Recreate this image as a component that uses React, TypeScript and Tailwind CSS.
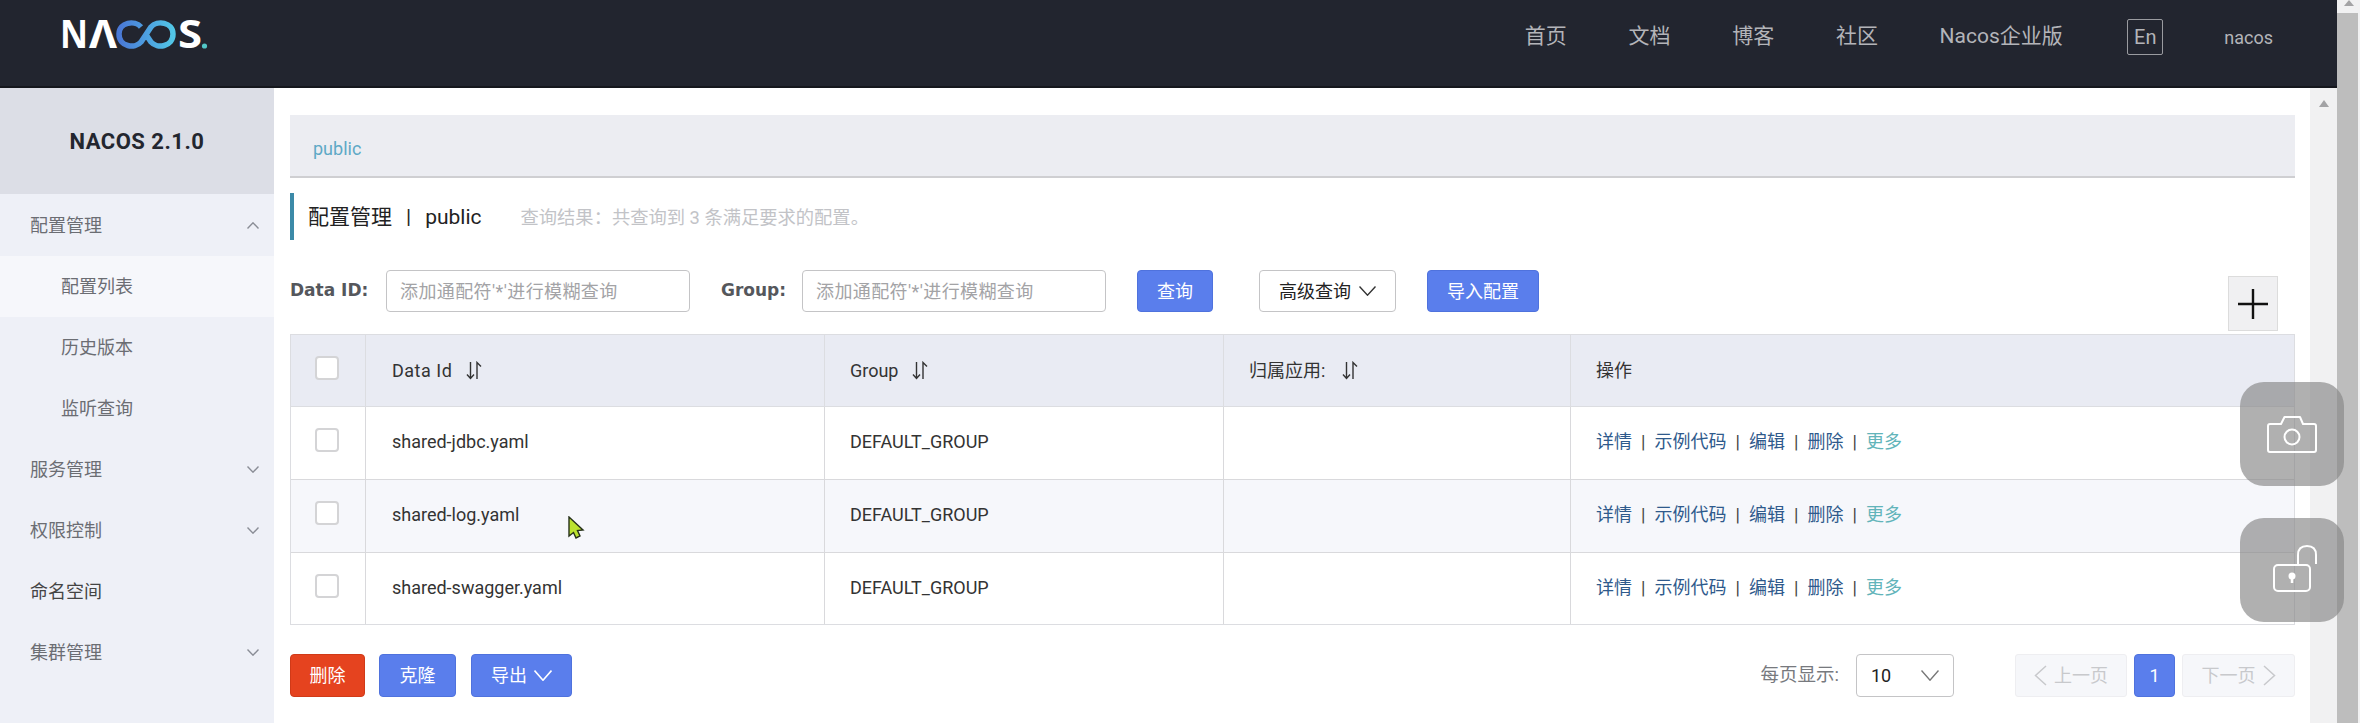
import React from "react";

const FONT = "font-['Roboto','Noto_Sans_CJK_SC',sans-serif]";

const navLinks = [
  { label: "首页", cls: "w-[42px]" },
  { label: "文档", cls: "w-[42px]" },
  { label: "博客", cls: "w-[42px]" },
  { label: "社区", cls: "w-[42px]" },
  { label: "Nacos企业版", cls: "w-[127px]" },
];

const rows = [
  { id: "shared-jdbc.yaml", bg: "bg-white", h: "h-[73px] border-b" },
  { id: "shared-log.yaml", bg: "bg-[#f6f7fb]", h: "h-[73px] border-b" },
  { id: "shared-swagger.yaml", bg: "bg-white", h: "h-[71px]" },
];

const Chevron: React.FC<{ up?: boolean; w?: number; h?: number; color?: string; sw?: number }> = ({
  up,
  w = 12,
  h = 7,
  color = "#8a8d96",
  sw = 1.4,
}) => (
  <svg width={w} height={h} viewBox={`0 0 ${w} ${h}`} fill="none" className="shrink-0">
    <polyline
      points={up ? `0.5,${h - 0.5} ${w / 2},0.8 ${w - 0.5},${h - 0.5}` : `0.5,0.5 ${w / 2},${h - 0.8} ${w - 0.5},0.5`}
      stroke={color}
      strokeWidth={sw}
    />
  </svg>
);

const SortIcon = () => (
  <svg width="16" height="19" viewBox="0 0 16 19" fill="none" className="shrink-0">
    <path d="M4.5 1V17M1 13.5L4.5 17.5L8 13.5" stroke="#333" strokeWidth="1.4" />
    <path d="M11 18V1.5L15 5.5" stroke="#333" strokeWidth="1.4" />
  </svg>
);

const Logo = () => (
  <svg className="-mt-[15px]" width="150" height="60" viewBox="0 -16 150 60" fill="none">
    <defs>
      <linearGradient id="nacosInf" x1="0" y1="0" x2="1" y2="0">
        <stop offset="0" stopColor="#4a78d6" />
        <stop offset="0.5" stopColor="#4d9fe0" />
        <stop offset="1" stopColor="#52c6e6" />
      </linearGradient>
    </defs>
    <text x="0" y="28" fontFamily="Open Sans" fontWeight="700" fontSize="39" fill="#fff" textLength="28" lengthAdjust="spacingAndGlyphs">
      N
    </text>
    <text x="29" y="28" fontFamily="Noto Sans" fontWeight="700" fontSize="39" fill="#fff" textLength="28" lengthAdjust="spacingAndGlyphs">
      Λ
    </text>
    <path
      d="M81 7C75 0 59 2 59 14C59 27 75 29 81 22L91 7C97 0 113 2 113 14C113 27 97 29 91 22L87 16"
      stroke="url(#nacosInf)"
      strokeWidth="5.5"
    />
    <text x="118" y="28" fontFamily="Open Sans" fontWeight="700" fontSize="39" fill="#fff" textLength="24" lengthAdjust="spacingAndGlyphs">
      S
    </text>
    <circle cx="144.5" cy="26" r="2.6" fill="#52c6c6" />
  </svg>
);

const SideItem: React.FC<{ label: string; sub?: boolean; active?: boolean; arrow?: "up" | "down"; dark?: boolean }> = ({
  label,
  sub,
  active,
  arrow,
  dark,
}) => (
  <div
    className={`flex h-[61px] items-center justify-between pr-[15px] ${sub ? "pl-[61px]" : "pl-[30px]"} ${
      active ? "bg-[#f6f7fb]" : ""
    } ${dark ? "text-[#444]" : "text-[#6b6d73]"}`}
  >
    <span>{label}</span>
    {arrow && <Chevron up={arrow === "up"} />}
  </div>
);

const Checkbox = () => <div className="h-6 w-6 rounded-[4px] border-2 border-[#d4d4d6] bg-white" />;

const BlueButton: React.FC<{ children: React.ReactNode; cls: string }> = ({ children, cls }) => (
  <div className={`flex items-center justify-center rounded-[4px] border border-[#4f72dd] bg-[#5a7eec] text-white ${cls}`}>
    {children}
  </div>
);

const Sep = () => <span className="w-[22.5px] text-center text-[#444]">|</span>;

const Actions = () => (
  <div className="flex items-center text-[#2f5a8c]">
    <span>详情</span>
    <Sep />
    <span>示例代码</span>
    <Sep />
    <span>编辑</span>
    <Sep />
    <span>删除</span>
    <Sep />
    <span className="text-[#62b4ba]">更多</span>
  </div>
);

const App: React.FC = () => {
  return (
    <div className={`relative flex h-[723px] w-[2360px] overflow-hidden bg-white text-[18px] ${FONT}`}>
      <div className="flex w-[2337px] flex-col">
        {/* header */}
        <header className="flex h-[88px] shrink-0 items-start justify-between border-b-2 border-[#15171d] bg-[#22252f] pl-[60px] pr-[64px] pt-[19px]">
          <Logo />
          <nav className="flex h-[36px] items-center text-[21px] text-[#b3b4b9]">
            {navLinks.map((link) => (
              <span key={link.label} className={`mr-[61.7px] whitespace-nowrap ${link.cls}`}>
                {link.label}
              </span>
            ))}
            <span className="-ml-[1px] flex h-[36px] w-[36px] items-center justify-center rounded-[2px] border border-[#9a9ba0] text-[20px]">
              En
            </span>
            <span className="ml-[61px] text-[18px]">nacos</span>
          </nav>
        </header>

        <div className="flex min-h-0 flex-1">
          {/* sidebar */}
          <aside className="w-[274px] shrink-0 bg-[#eef0f7]">
            <div className="flex h-[106px] items-center justify-center bg-[#dcdee6] text-[22px] font-bold tracking-[0.5px] text-[#23262f]">
              NACOS 2.1.0
            </div>
            <div className="pt-[1px]">
              <SideItem label="配置管理" arrow="up" />
              <SideItem label="配置列表" sub active />
              <SideItem label="历史版本" sub />
              <SideItem label="监听查询" sub />
              <SideItem label="服务管理" arrow="down" />
              <SideItem label="权限控制" arrow="down" />
              <SideItem label="命名空间" dark />
              <SideItem label="集群管理" arrow="down" />
            </div>
          </aside>

          {/* main */}
          <main className="w-[2036px] shrink-0 pl-[16px] pr-[15px] pt-[27px]">
            <div className="flex h-[63px] items-center border-b-2 border-[#cfcfd2] bg-[#ecedf2] pl-[23px] pt-[6px] text-[#5ea9c6]">
              public
            </div>

            <div className="mt-[15px] flex h-[47px] items-center border-l-4 border-[#3c8aa8] pl-[14px] pt-[2px]">
              <span className="text-[21px] text-[#222]">配置管理</span>
              <span className="mx-[14px] text-[21px] text-[#222]">|</span>
              <span className="text-[21px] text-[#222]">public</span>
              <span className="ml-[39px] text-[18.3px] text-[#c2c3c7]">查询结果：共查询到 3 条满足要求的配置。</span>
            </div>

            <div className="mt-[30px] flex h-[42px] items-start">
              <span className="flex h-full w-[96px] items-center font-['DejaVu_Sans',sans-serif] text-[17px] font-bold text-[#55575c]">
                Data ID:
              </span>
              <div className="flex h-full w-[304px] items-center rounded-[4px] border border-[#c4c4c6] pl-[13px] tracking-[0.4px] text-[#a3a3a6]">
                添加通配符'*'进行模糊查询
              </div>
              <span className="ml-[31px] flex h-full w-[81px] items-center font-['DejaVu_Sans',sans-serif] text-[17px] font-bold text-[#55575c]">
                Group:
              </span>
              <div className="flex h-full w-[304px] items-center rounded-[4px] border border-[#c4c4c6] pl-[13px] tracking-[0.4px] text-[#a3a3a6]">
                添加通配符'*'进行模糊查询
              </div>
              <BlueButton cls="ml-[31px] h-full w-[76px]">查询</BlueButton>
              <div className="ml-[46px] flex h-full w-[137px] items-center justify-center gap-[8px] rounded-[4px] border border-[#c4c4c6] text-[#222]">
                高级查询
                <Chevron w={17} h={10} color="#333" />
              </div>
              <BlueButton cls="ml-[31px] h-full w-[112px]">导入配置</BlueButton>
              <div className="ml-[689px] mt-[6px] flex h-[55px] w-[50px] shrink-0 items-center justify-center border border-[#dcdcdc] bg-[#f0f0f2]">
                <svg width="32" height="32" viewBox="0 0 32 32">
                  <path d="M16 1V31M1 16H31" stroke="#111" strokeWidth="2.4" />
                </svg>
              </div>
            </div>

            {/* table */}
            <div className="mt-[22px] border border-[#dcdde1]">
              <div className="grid h-[72px] grid-cols-[75px_459px_399px_347px_723px] border-b border-[#dcdde1] bg-[#e9ebf3] text-[#333]">
                <div className="flex items-start justify-center border-r border-[#dcdde1] pr-[3px] pt-[21px]">
                  <Checkbox />
                </div>
                <div className="flex items-center gap-[14px] border-r border-[#dcdde1] pl-[26px]">
                  <span className="tracking-[0.5px]">Data Id</span>
                  <SortIcon />
                </div>
                <div className="flex items-center gap-[14px] border-r border-[#dcdde1] pl-[25px]">
                  Group
                  <SortIcon />
                </div>
                <div className="flex items-center gap-[17px] border-r border-[#dcdde1] pl-[25px]">
                  归属应用:
                  <SortIcon />
                </div>
                <div className="flex items-center pl-[25px]">操作</div>
              </div>
              {rows.map((row) => (
                <div
                  key={row.id}
                  className={`grid grid-cols-[75px_459px_399px_347px_723px] border-[#d9d9dc] text-[#333] ${row.bg} ${row.h}`}
                >
                  <div className="flex items-start justify-center border-r border-[#d9d9dc] pr-[3px] pt-[21px]">
                    <Checkbox />
                  </div>
                  <div className="flex items-center border-r border-[#d9d9dc] pb-[3px] pl-[26px]">{row.id}</div>
                  <div className="flex items-center border-r border-[#d9d9dc] pb-[3px] pl-[25px]">DEFAULT_GROUP</div>
                  <div className="border-r border-[#d9d9dc]" />
                  <div className="flex items-center pb-[3px] pl-[25px]">
                    <Actions />
                  </div>
                </div>
              ))}
            </div>

            {/* footer */}
            <div className="mt-[29px] flex h-[43px] items-stretch">
              <div className="flex w-[75px] items-center justify-center rounded-[4px] border border-[#d03a18] bg-[#e5431f] text-white">
                删除
              </div>
              <BlueButton cls="ml-[14px] w-[77px]">克隆</BlueButton>
              <BlueButton cls="ml-[15px] w-[101px] gap-[7px]">
                导出
                <Chevron w={18} h={11} color="#fff" sw={1.6} />
              </BlueButton>
              <span className="ml-auto flex items-center text-[18.5px] text-[#77797e]">每页显示:</span>
              <div className="ml-[17px] flex w-[98px] items-center justify-between rounded-[4px] border border-[#c4c4c6] pl-[14px] pr-[14px] text-[#222]">
                10
                <Chevron w={18} h={11} color="#777" />
              </div>
              <div className="ml-[61px] flex w-[112px] items-center justify-center gap-[7px] rounded-[3px] border border-[#eeeef1] bg-[#f6f7fa] text-[#c8c9cc]">
                <svg width="13" height="21" viewBox="0 0 13 21" fill="none">
                  <polyline points="12,1 1.5,10.5 12,20" stroke="#c8c9cc" strokeWidth="1.5" />
                </svg>
                上一页
              </div>
              <BlueButton cls="ml-[7px] w-[41px]">1</BlueButton>
              <div className="ml-[7px] flex w-[113px] items-center justify-center gap-[7px] rounded-[3px] border border-[#eeeef1] bg-[#f6f7fa] text-[#c8c9cc]">
                下一页
                <svg width="13" height="21" viewBox="0 0 13 21" fill="none">
                  <polyline points="1,1 11.5,10.5 1,20" stroke="#c8c9cc" strokeWidth="1.5" />
                </svg>
              </div>
            </div>
          </main>

          {/* inner scrollbar */}
          <div className="flex w-[27px] shrink-0 justify-center bg-[#f1f1f2] pt-[12px]">
            <div className="h-0 w-0 border-x-[5px] border-b-[7px] border-x-transparent border-b-[#a3a3a5]" />
          </div>
        </div>
      </div>

      {/* outer scrollbar */}
      <div className="flex w-[23px] shrink-0 flex-col bg-[#f1f1f2]">
        <div className="flex h-[13px] justify-center">
          <div className="h-0 w-0 border-x-[5px] border-b-[6px] border-x-transparent border-b-[#a3a3a5]" />
        </div>
        <div className="mr-[2px] flex-1 bg-[#bdbdbd]" />
      </div>

      {/* floating buttons */}
      <div className="absolute left-[2240px] top-[382px] flex h-[104px] w-[104px] items-center justify-center rounded-[24px] bg-[#868686a6]">
        <svg width="50" height="38" viewBox="0 0 50 38" fill="none" stroke="#fff" strokeWidth="2">
          <path d="M3 9H14L17.5 2H33L36 9H47Q49 9 49 11V35Q49 37 47 37H3Q1 37 1 35V11Q1 9 3 9Z" strokeLinejoin="round" />
          <circle cx="25" cy="22" r="7.5" />
        </svg>
      </div>
      <div className="absolute left-[2240px] top-[518px] h-[104px] w-[104px] rounded-[24px] bg-[#868686a6]">
        <svg className="absolute left-[33px] top-[27px]" width="44" height="48" viewBox="0 0 44 48" fill="none" stroke="#fff" strokeWidth="2">
          <rect x="1" y="20" width="36" height="26" rx="4" />
          <path d="M25 20V10Q25 1 34 1Q43 1 43 10V19" />
          <circle cx="19" cy="31" r="2.5" fill="#fff" />
          <path d="M19 32V38" strokeWidth="2.5" />
        </svg>
      </div>

      {/* mouse cursor */}
      <svg className="absolute left-[567px] top-[516px]" width="18" height="24" viewBox="0 0 18 24">
        <path d="M2 1L16 14L10.5 14.5L13 20L9 22L6.5 16.5L2 20Z" fill="#bbe22f" stroke="#26301a" strokeWidth="1.4" />
      </svg>
    </div>
  );
};

export default App;
